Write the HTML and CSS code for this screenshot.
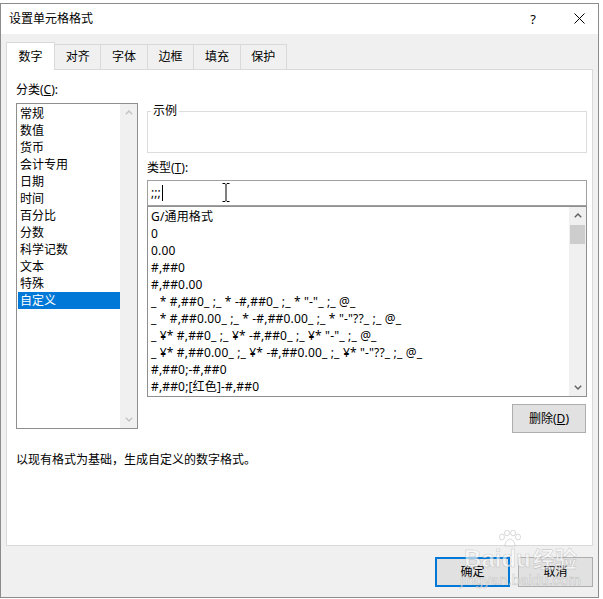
FILE: index.html
```html
<!DOCTYPE html>
<html lang="zh-CN">
<head>
<meta charset="utf-8">
<title>设置单元格格式</title>
<link rel="stylesheet" href="styles.css">
</head>
<body>
<div class="dialog">
  <div class="titlebar">
    <span class="title">设置单元格格式</span>
    <span class="help">?</span>
    <span class="close"><svg width="11" height="11" viewBox="0 0 11 11"><path d="M0.5 0.5L10.5 10.5M10.5 0.5L0.5 10.5" stroke="#000" stroke-width="1" fill="none"/></svg></span>
  </div>
  <div class="body">
    <div class="tabs">
      <div class="tab active">数字</div>
      <div class="tab">对齐</div>
      <div class="tab">字体</div>
      <div class="tab">边框</div>
      <div class="tab">填充</div>
      <div class="tab">保护</div>
    </div>
    <div class="panel">
      <div class="cols">
        <div class="left">
          <div class="label">分类(<u>C</u>):</div>
          <div class="listbox cat">
            <div class="items">
              <div class="item">常规</div>
              <div class="item">数值</div>
              <div class="item">货币</div>
              <div class="item">会计专用</div>
              <div class="item">日期</div>
              <div class="item">时间</div>
              <div class="item">百分比</div>
              <div class="item">分数</div>
              <div class="item">科学记数</div>
              <div class="item">文本</div>
              <div class="item">特殊</div>
              <div class="item sel">自定义</div>
            </div>
            <div class="vscroll">
              <div class="arrow"><svg width="8" height="5" viewBox="0 0 8 5"><path d="M0.8 4.2L4 1L7.2 4.2" stroke="#c4c4c4" stroke-width="1.4" fill="none"/></svg></div>
              <div class="arrow"><svg width="8" height="5" viewBox="0 0 8 5"><path d="M0.8 0.8L4 4L7.2 0.8" stroke="#c4c4c4" stroke-width="1.4" fill="none"/></svg></div>
            </div>
          </div>
        </div>
        <div class="right">
          <div class="sample"><span class="sample-label">示例</span></div>
          <div class="label type-label">类型(<u>T</u>):</div>
          <div class="input"><span>;;;</span><span class="caret"></span><svg class="ibeam" width="8" height="19" viewBox="0 0 8 19"><path d="M0.5 0.5h2.5l1 1l1-1h2.5M4 1.5v16M0.5 18.5h2.5l1-1l1 1h2.5" stroke="#000" stroke-width="1" fill="none"/></svg></div>
          <div class="listbox fmt">
            <div class="items">
              <div class="item">G/通用格式</div>
              <div class="item">0</div>
              <div class="item">0.00</div>
              <div class="item">#,##0</div>
              <div class="item">#,##0.00</div>
              <div class="item">_ * #,##0_ ;_ * -#,##0_ ;_ * "-"_ ;_ @_</div>
              <div class="item">_ * #,##0.00_ ;_ * -#,##0.00_ ;_ * "-"??_ ;_ @_</div>
              <div class="item">_ ¥* #,##0_ ;_ ¥* -#,##0_ ;_ ¥* "-"_ ;_ @_</div>
              <div class="item">_ ¥* #,##0.00_ ;_ ¥* -#,##0.00_ ;_ ¥* "-"??_ ;_ @_</div>
              <div class="item">#,##0;-#,##0</div>
              <div class="item">#,##0;[红色]-#,##0</div>
            </div>
            <div class="vscroll">
              <div class="arrow"><svg width="8" height="5" viewBox="0 0 8 5"><path d="M0.8 4.2L4 1L7.2 4.2" stroke="#606060" stroke-width="1.4" fill="none"/></svg></div>
              <div class="thumb"></div>
              <div class="track"></div>
              <div class="arrow"><svg width="8" height="5" viewBox="0 0 8 5"><path d="M0.8 0.8L4 4L7.2 0.8" stroke="#606060" stroke-width="1.4" fill="none"/></svg></div>
            </div>
          </div>
          <div class="btnrow"><button class="btn">删除(<u>D</u>)</button></div>
        </div>
      </div>
      <div class="desc">以现有格式为基础，生成自定义的数字格式。</div>
    </div>
    <div class="footer">
      <button class="btn default">确定</button>
      <button class="btn">取消</button>
    </div>
  </div>
  <div class="watermark">
    <svg class="paw" width="26" height="18" viewBox="0 0 26 18">
      <ellipse cx="5" cy="7" rx="2.5" ry="3" />
      <ellipse cx="10" cy="3" rx="2.5" ry="2.8" />
      <ellipse cx="16" cy="3" rx="2.5" ry="2.8" />
      <ellipse cx="21" cy="7" rx="2.5" ry="3" />
      <path d="M8 16c0-4 3-7 5-7s5 3 5 7z" />
    </svg>
    <div class="wm-main"><span class="wm-en">Baidu</span><span class="wm-cn">经验</span></div>
    <div class="wm-url">jingyan.baidu.com</div>
  </div>
</div>
</body>
</html>
```

FILE: styles.css
```css
* {
  box-sizing: border-box;
}

body {
  margin: 0;
  background: #ffffff;
  font-family: "Noto Sans", "Noto Sans CJK SC", sans-serif;
  font-size: 12px;
  color: #000000;
}

.dialog {
  position: relative;
  margin-top: 3px;
  width: 599px;
  height: 595px;
  border: 1px solid #8c8c8c;
  display: flex;
  flex-direction: column;
  background: #f0f0f0;
}

.titlebar {
  height: 30px;
  flex: none;
  background: #ffffff;
  display: flex;
  align-items: center;
  padding: 0 9px 1px 8px;
}

.title {
  flex: 1;
  line-height: 16px;
}

.help {
  width: 20px;
  text-align: center;
  font-size: 13px;
  line-height: 16px;
  margin-right: 26px;
}

.close {
  width: 20px;
  height: 11px;
  display: flex;
  justify-content: center;
}

.body {
  flex: 1;
  display: flex;
  flex-direction: column;
  padding: 8px 5px 10px 5px;
}

.tabs {
  display: flex;
  align-items: flex-end;
  height: 27px;
  flex: none;
}

.tab {
  height: 25px;
  padding: 0 10.7px;
  border: 1px solid #d9d9d9;
  border-bottom: none;
  margin-left: -1px;
  display: flex;
  align-items: center;
  line-height: 16px;
  background: #f0f0f0;
}

.tab:first-child {
  margin-left: 0;
  padding: 0 11.5px;
}

.tab.active {
  height: 28px;
  margin-bottom: -1px;
  background: #ffffff;
  position: relative;
  z-index: 1;
}

.panel {
  height: 477px;
  flex: none;
  background: #ffffff;
  border: 1px solid #d9d9d9;
  padding: 12px 5px 0 9px;
}

.cols {
  display: flex;
  gap: 9px;
  align-items: flex-start;
}

.left {
  width: 122px;
  display: flex;
  flex-direction: column;
  gap: 5px;
}

.label {
  line-height: 16px;
  height: 16px;
}

.listbox {
  border: 1px solid #8f8f8f;
  background: #ffffff;
  display: flex;
}

.cat {
  height: 326px;
}

.cat .items {
  flex: 1;
  padding: 1px 0 0 1px;
}

.item {
  line-height: 17px;
  height: 17px;
  padding-left: 2px;
  white-space: nowrap;
}

.item.sel {
  background: #0078d7;
  color: #ffffff;
}

.vscroll {
  width: 17px;
  flex: none;
  background: #f0f0f0;
  display: flex;
  flex-direction: column;
  justify-content: space-between;
}

.arrow {
  width: 17px;
  height: 17px;
  flex: none;
  display: flex;
  align-items: center;
  justify-content: center;
}

.thumb {
  height: 19px;
  flex: none;
  margin: 1px 1px 0 1px;
  background: #cdcdcd;
}

.track {
  flex: 1;
}

.right {
  width: 440px;
  display: flex;
  flex-direction: column;
}

.sample {
  margin-top: 29px;
  height: 42px;
  border: 1px solid #dcdcdc;
  position: relative;
}

.sample-label {
  position: absolute;
  top: -9px;
  left: 3px;
  padding: 0 2px;
  background: #ffffff;
  line-height: 16px;
}

.type-label {
  margin-top: 7px;
}

.input {
  margin-top: 4px;
  height: 26px;
  border: 1px solid #a0a0a0;
  display: flex;
  align-items: center;
  padding-left: 3px;
  position: relative;
  line-height: 16px;
}

.caret {
  width: 1px;
  height: 16px;
  background: #000000;
  margin-left: 1px;
}

.ibeam {
  position: absolute;
  left: 74px;
  top: 2px;
}

.fmt {
  height: 191px;
}

.fmt .items {
  flex: 1;
  padding: 1px 0 0 1px;
}

.fmt .item {
  letter-spacing: 0.16px;
}

.btnrow {
  display: flex;
  justify-content: flex-end;
  margin-top: 7px;
  padding-right: 1px;
}

.btn {
  font: inherit;
  width: 74px;
  height: 29px;
  background: #e1e1e1;
  border: 1px solid #adadad;
  padding: 0;
  color: #000000;
  line-height: 16px;
}

.desc {
  margin-top: 19px;
  line-height: 16px;
}

.footer {
  margin-top: 11px;
  display: flex;
  justify-content: flex-end;
  gap: 8px;
  height: 30px;
  flex: none;
}

.footer .btn {
  width: 75px;
  height: 30px;
}

.btn.default {
  border: 2px solid #0078d7;
}

.watermark {
  position: absolute;
  left: 459px;
  top: 526px;
  display: flex;
  flex-direction: column;
  align-items: center;
  pointer-events: none;
  color: rgba(255, 255, 255, 0.6);
  -webkit-text-stroke: 0.6px rgba(150, 150, 150, 0.45);
}

.paw {
  margin-left: -20px;
  fill: rgba(255, 255, 255, 0.6);
  stroke: rgba(150, 150, 150, 0.45);
  stroke-width: 0.8;
}

.wm-main {
  display: flex;
  align-items: baseline;
  line-height: 20px;
}

.wm-en {
  font-family: "Liberation Sans", sans-serif;
  font-weight: bold;
  font-size: 24px;
}

.wm-cn {
  font-size: 22px;
  font-weight: bold;
  margin-left: 2px;
}

.wm-url {
  font-family: "Liberation Sans", sans-serif;
  font-size: 15px;
  line-height: 18px;
  margin-top: 2px;
}
```
